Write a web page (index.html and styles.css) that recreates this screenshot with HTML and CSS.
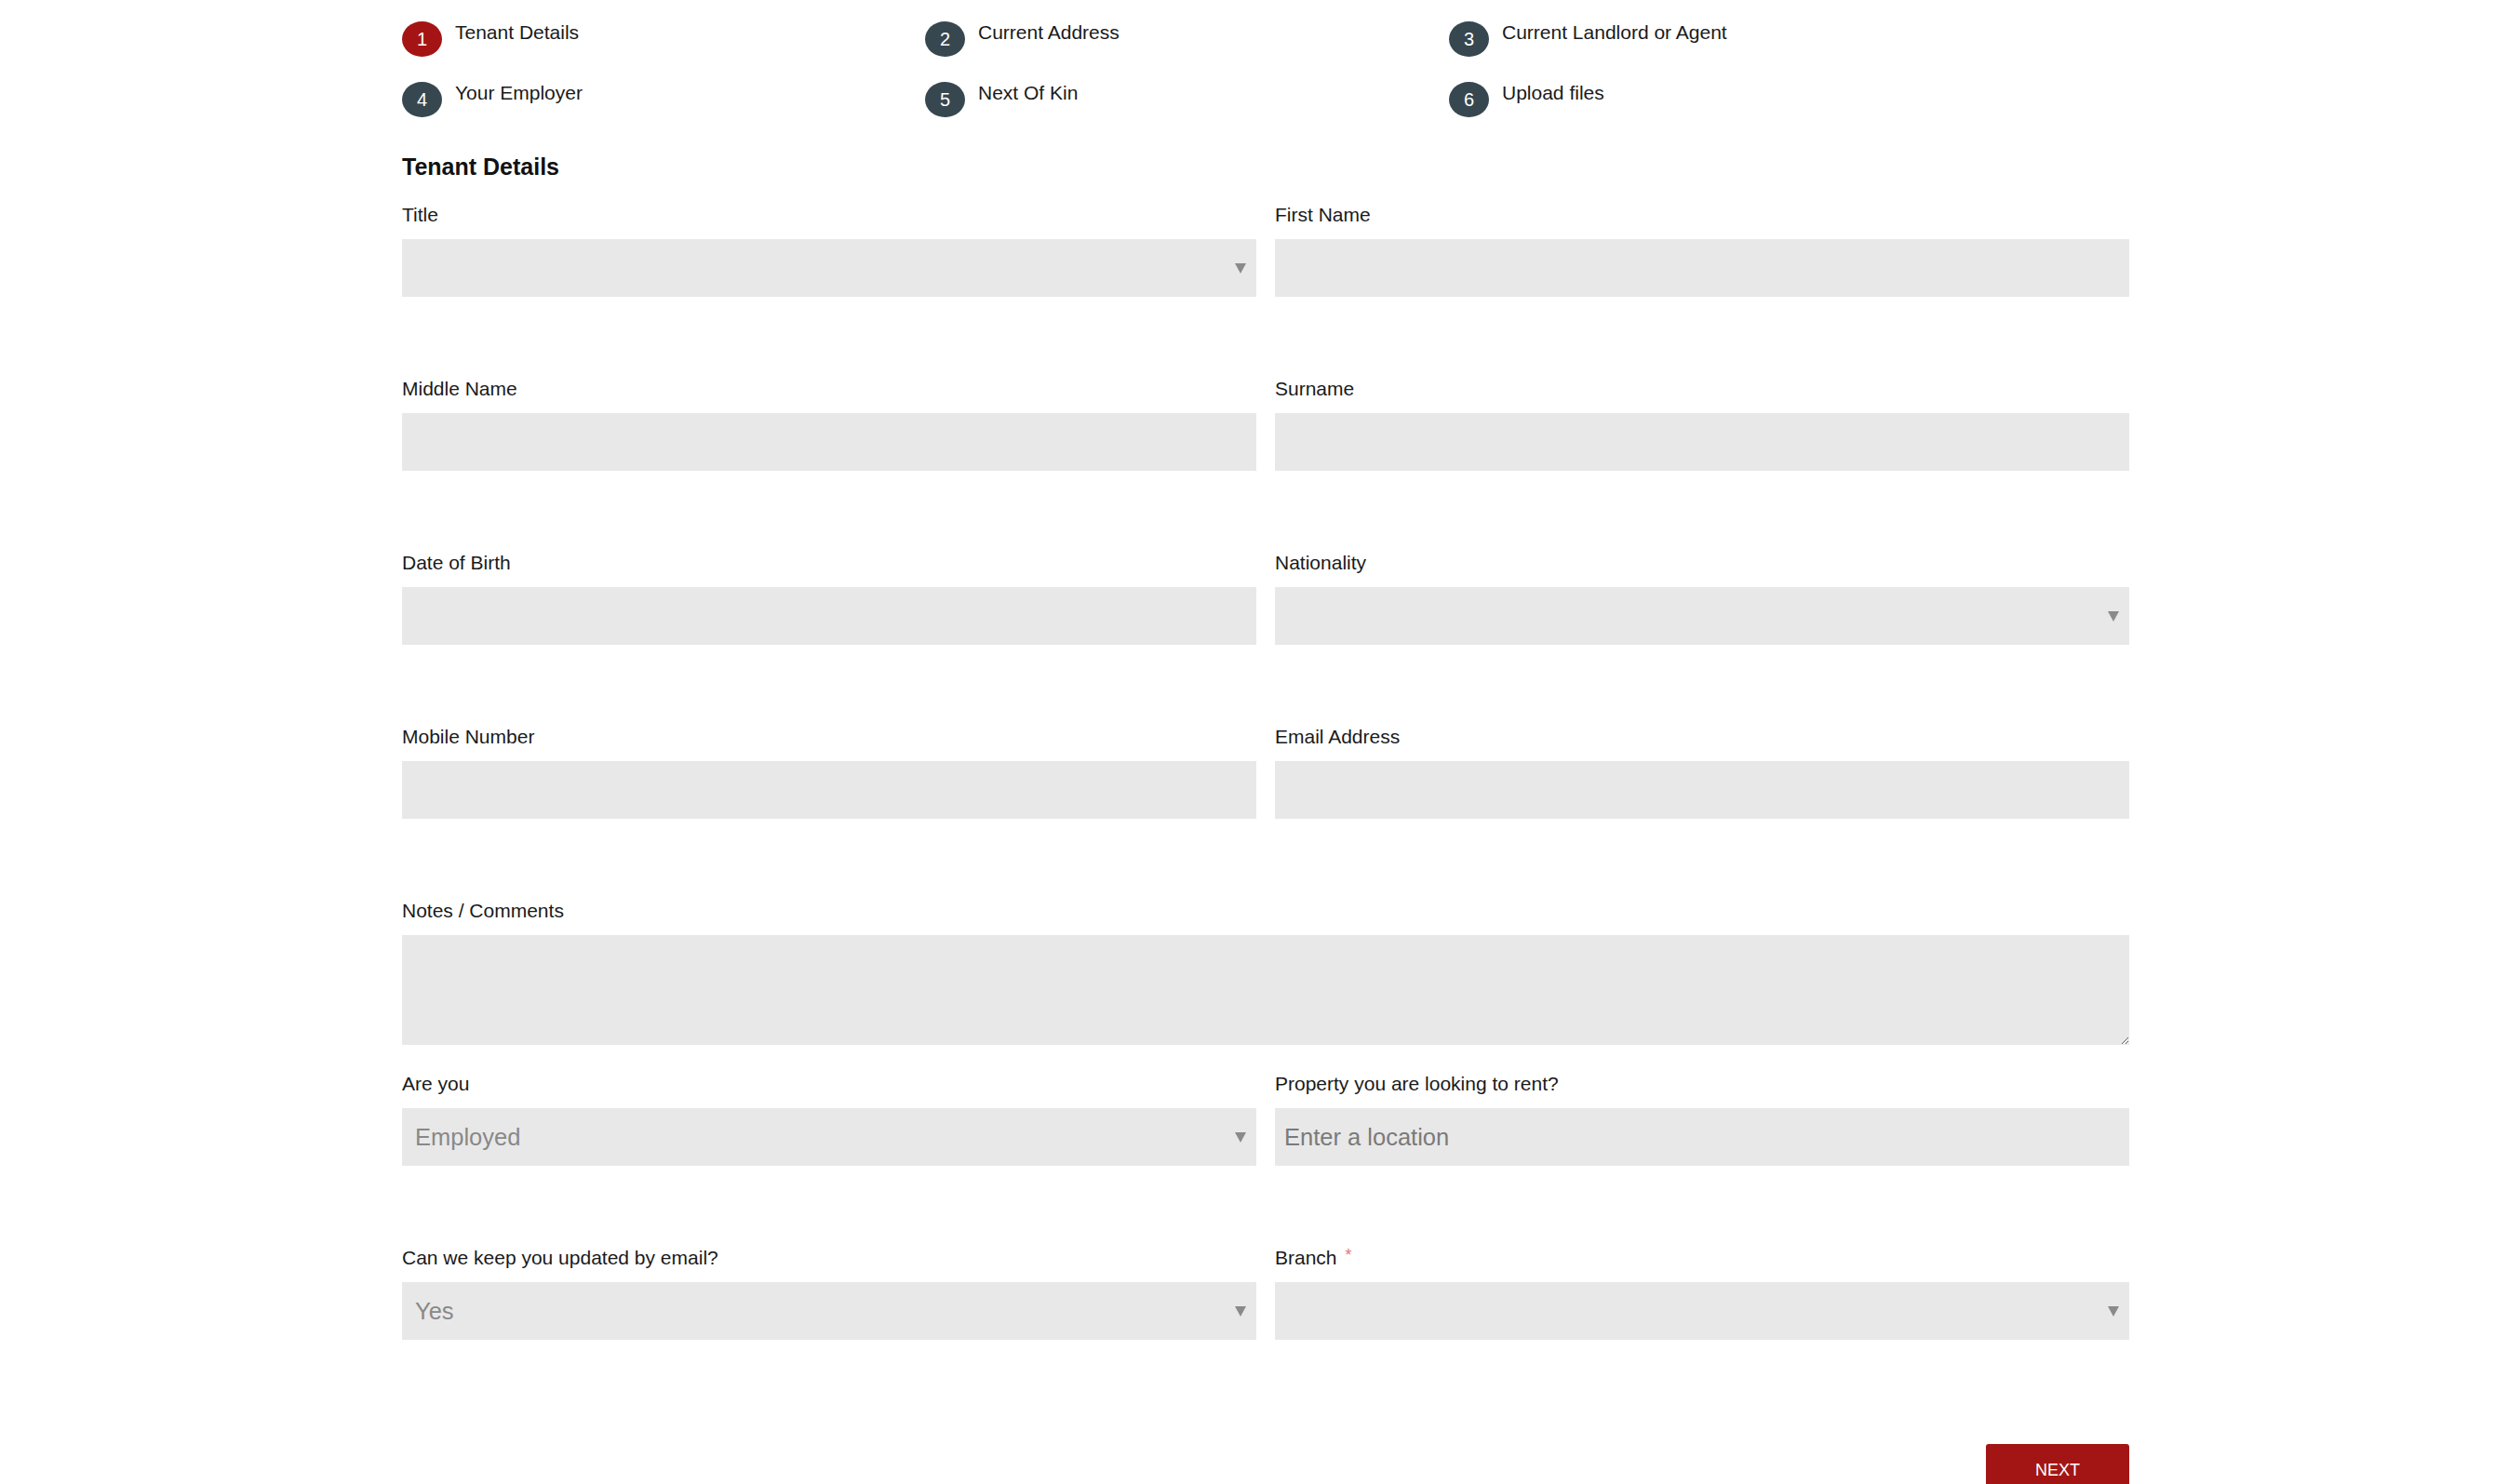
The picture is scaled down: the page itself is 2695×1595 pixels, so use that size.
FILE: index.html
```html
<!DOCTYPE html>
<html lang="en">
<head>
<meta charset="utf-8">
<title>Tenant Application</title>
<link rel="stylesheet" href="styles.css">
</head>
<body>
<div class="page">
  <ol class="steps">
    <li class="step"><span class="step-num active">1</span><span class="step-label">Tenant Details</span></li>
    <li class="step"><span class="step-num">2</span><span class="step-label">Current Address</span></li>
    <li class="step"><span class="step-num">3</span><span class="step-label">Current Landlord or Agent</span></li>
    <li class="step"><span class="step-num">4</span><span class="step-label">Your Employer</span></li>
    <li class="step"><span class="step-num">5</span><span class="step-label">Next Of Kin</span></li>
    <li class="step"><span class="step-num">6</span><span class="step-label">Upload files</span></li>
  </ol>

  <h2 class="section-title">Tenant Details</h2>

  <form class="form-grid">
    <div class="field">
      <label class="label">Title</label>
      <div class="select-wrap"><select class="control"><option></option></select></div>
    </div>
    <div class="field">
      <label class="label">First Name</label>
      <input class="control" type="text">
    </div>
    <div class="field">
      <label class="label">Middle Name</label>
      <input class="control" type="text">
    </div>
    <div class="field">
      <label class="label">Surname</label>
      <input class="control" type="text">
    </div>
    <div class="field">
      <label class="label">Date of Birth</label>
      <input class="control" type="text">
    </div>
    <div class="field">
      <label class="label">Nationality</label>
      <div class="select-wrap"><select class="control"><option></option></select></div>
    </div>
    <div class="field">
      <label class="label">Mobile Number</label>
      <input class="control" type="text">
    </div>
    <div class="field">
      <label class="label">Email Address</label>
      <input class="control" type="text">
    </div>
    <div class="field field-wide">
      <label class="label">Notes / Comments</label>
      <textarea class="control textarea"></textarea>
    </div>
    <div class="field">
      <label class="label">Are you</label>
      <div class="select-wrap"><select class="control"><option>Employed</option></select></div>
    </div>
    <div class="field">
      <label class="label">Property you are looking to rent?</label>
      <input class="control control-text" type="text" placeholder="Enter a location">
    </div>
    <div class="field">
      <label class="label">Can we keep you updated by email?</label>
      <div class="select-wrap"><select class="control"><option>Yes</option></select></div>
    </div>
    <div class="field">
      <label class="label">Branch <span class="req">*</span></label>
      <div class="select-wrap"><select class="control"><option></option></select></div>
    </div>
    <div class="actions">
      <button class="btn-next" type="button">NEXT</button>
    </div>
  </form>
</div>
</body>
</html>
```

FILE: styles.css
```css
html, body {
  margin: 0;
  padding: 0;
  background: #ffffff;
  overflow: hidden;
}

body {
  font-family: "Liberation Sans", Arial, sans-serif;
  color: #1a1a1a;
}

.page {
  margin-left: 432px;
  width: 1856px;
  padding-top: 23px;
}

.steps {
  list-style: none;
  margin: 0;
  padding: 0;
  display: grid;
  grid-template-columns: 562px 563px 731px;
  row-gap: 27px;
}

.step {
  display: flex;
  align-items: flex-start;
  gap: 14px;
}

.step-num {
  flex: 0 0 auto;
  width: 43px;
  height: 38px;
  border-radius: 50%;
  background: #37474f;
  color: #ffffff;
  font-size: 20px;
  line-height: 1;
  display: flex;
  align-items: center;
  justify-content: center;
}

.step-num.active {
  background: #a51414;
}

.step-label {
  font-size: 21px;
  line-height: normal;
  color: #1a1a1a;
}

.section-title {
  margin: 39px 0 0;
  font-size: 25px;
  font-weight: bold;
  line-height: normal;
  color: #111111;
}

.form-grid {
  margin-top: 25px;
  display: grid;
  grid-template-columns: 918px 918px;
  column-gap: 20px;
}

.field {
  padding-bottom: 30px;
}

.field-wide {
  grid-column: 1 / -1;
}

.label {
  display: block;
  font-size: 21px;
  line-height: normal;
  margin-bottom: 14px;
  color: #1a1a1a;
}

.req {
  color: #e07a7a;
  font-size: 18px;
  line-height: 1;
  vertical-align: top;
  margin-left: 3px;
}

.control {
  display: block;
  box-sizing: border-box;
  width: 100%;
  height: 62px;
  margin: 0 0 57px;
  border: none;
  border-radius: 0;
  background: #e8e8e8;
  font-family: "Liberation Sans", Arial, sans-serif;
  font-size: 25.5px;
  color: #888888;
  padding: 0 14px;
  outline: none;
  -webkit-appearance: none;
  appearance: none;
}

.control-text {
  padding: 0 10px;
  color: #555555;
}

.control-text::placeholder {
  color: #7a7a7a;
}

.textarea {
  height: 118px;
  margin-bottom: 0;
  resize: both;
  padding: 10px 14px;
}

.select-wrap {
  position: relative;
}

.select-wrap::after {
  content: "";
  position: absolute;
  right: 11px;
  top: 26px;
  width: 0;
  height: 0;
  border-left: 6px solid transparent;
  border-right: 6px solid transparent;
  border-top: 11px solid #8a8a8a;
  pointer-events: none;
}

.actions {
  grid-column: 1 / -1;
  display: flex;
  justify-content: flex-end;
  margin-top: 25px;
}

.btn-next {
  width: 154px;
  height: 56px;
  border: none;
  border-radius: 3px;
  background: #a31515;
  color: #ffffff;
  font-family: "Liberation Sans", Arial, sans-serif;
  font-size: 18px;
  padding: 0;
  display: flex;
  align-items: center;
  justify-content: center;
}
```
